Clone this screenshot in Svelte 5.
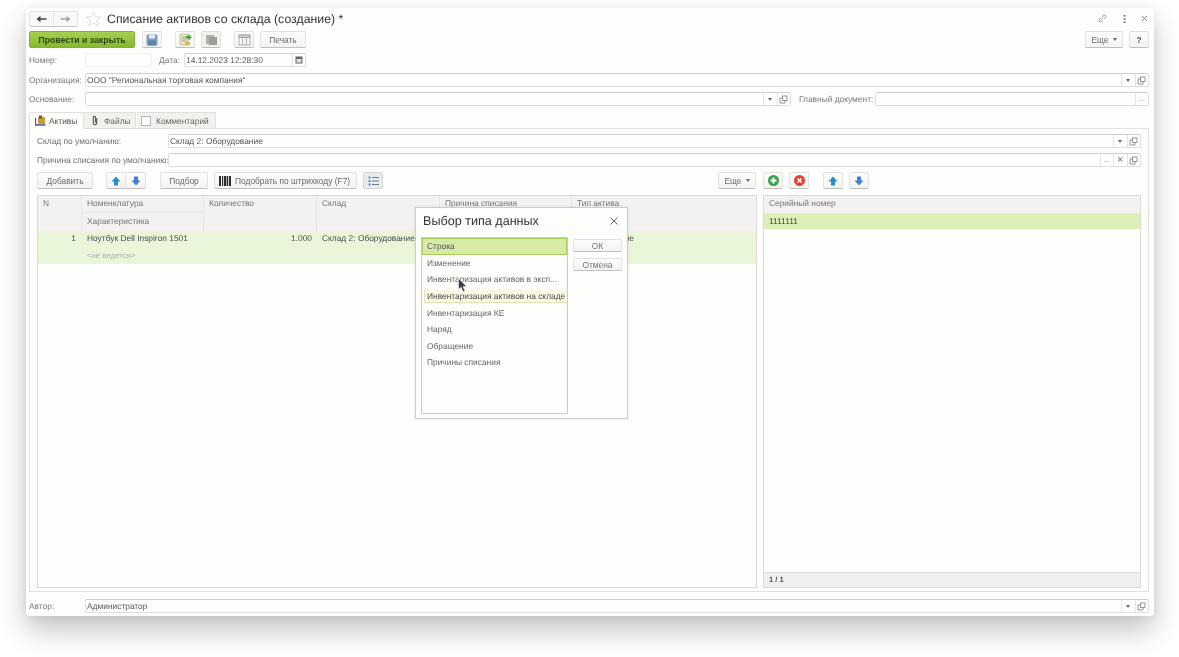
<script lang="ts">
  const listItems = [
    "Строка",
    "Изменение",
    "Инвентаризация активов в эксп...",
    "Инвентаризация активов на складе",
    "Инвентаризация КЕ",
    "Наряд",
    "Обращение",
    "Причины списания",
  ];
</script>

{#snippet openIcon()}
  <svg width="9" height="9" viewBox="0 0 9 9" fill="none" stroke="#8a8a8a" stroke-width="0.9">
    <rect x="3.5" y="1" width="4.5" height="4.5" />
    <path d="M3.5 3H1v5h5V5.5" />
  </svg>
{/snippet}

{#snippet arrow(dir: "up" | "down")}
  <svg width="10" height="10" viewBox="0 0 10 10" class:flip={dir === "down"}>
    <path d="M5 0.5 9.5 5.5H7v4H3v-4H0.5z" fill={dir === "up" ? "#2a8fc9" : "#3f83cf"} />
  </svg>
{/snippet}

{#snippet field(value: string, kind: string[])}
  <div class="field">
    <span class="field__value">{value}</span>
    {#each kind as k}
      <span class="field__btn">
        {#if k === "drop"}<i class="tri"></i>
        {:else if k === "open"}{@render openIcon()}
        {:else if k === "dots"}<span class="dots">...</span>
        {:else if k === "clear"}<span class="clear">×</span>
        {/if}
      </span>
    {/each}
  </div>
{/snippet}

<div class="frame">
  <div class="window">
    <header class="titlebar">
      <div class="nav">
        <button class="nav__btn" aria-label="Назад">
          <svg width="11" height="8" viewBox="0 0 11 8"><path d="M0.5 4 4.5 0.8V3.2H10.5V4.8H4.5V7.2z" fill="#444" /></svg>
        </button>
        <button class="nav__btn" aria-label="Вперед">
          <svg width="11" height="8" viewBox="0 0 11 8"><path d="M10.5 4 6.5 0.8V3.2H0.5V4.8H6.5V7.2z" fill="#a5a5a5" /></svg>
        </button>
      </div>
      <svg class="star" width="17" height="16" viewBox="0 0 17 16" fill="none" stroke="#e0e0dc" stroke-width="1">
        <path d="M8.5 1 10.6 6h5.4l-4.3 3.5 1.6 5.4-4.8-3.1-4.8 3.1 1.6-5.4L1 6h5.4z" />
      </svg>
      <h1>Списание активов со склада (создание) *</h1>
      <div class="titlebar__tools">
        <svg width="11" height="11" viewBox="0 0 11 11" fill="none" stroke="#9a9a9a" stroke-width="0.9">
          <path d="M4.5 6.5 6.5 4.5M4 5 2 7a1.6 1.6 0 0 0 2 2l2-2M7 6l2-2a1.6 1.6 0 0 0-2-2L5 4" />
        </svg>
        <svg width="3" height="8" viewBox="0 0 3 8" fill="#777"><rect x="0.5" y="0" width="2" height="1.6" /><rect x="0.5" y="3.2" width="2" height="1.6" /><rect x="0.5" y="6.4" width="2" height="1.6" /></svg>
        <svg width="7" height="7" viewBox="0 0 7 7" stroke="#8a8a8a" stroke-width="1"><path d="M1 1 6 6M6 1 1 6" /></svg>
      </div>
    </header>

    <div class="commands">
      <button class="btn btn--primary">Провести и закрыть</button>
      <button class="btn btn--icon gap-7" aria-label="Записать">
        <svg width="12" height="12" viewBox="0 0 12 12">
          <rect x="0.5" y="0.5" width="11" height="11" rx="1" fill="#7c9dc0" />
          <rect x="3" y="1" width="6" height="3.5" fill="#dfe8f0" />
          <rect x="2.5" y="6.5" width="7" height="5" fill="#5f81a6" />
        </svg>
      </button>
      <button class="btn btn--icon gap-13" aria-label="Создать на основании">
        <svg width="13" height="13" viewBox="0 0 13 13">
          <rect x="1" y="1" width="8" height="11" fill="#e9e6c8" stroke="#a9a98a" stroke-width="0.6" />
          <path d="M2.5 4h5M2.5 6h5M2.5 8h5" stroke="#9aa07a" stroke-width="0.8" />
          <path d="M7 3h2.5V1l3.3 3.2-3.3 3.2V5.5H7z" fill="#3fa24a" />
          <path d="M6 9h5v3H6z" fill="#d9b74a" />
        </svg>
      </button>
      <button class="btn btn--icon gap-6 btn--muted" aria-label="Структура подчиненности">
        <svg width="13" height="12" viewBox="0 0 13 12">
          <rect x="1" y="1" width="8" height="9" fill="#b4b0ae" />
          <rect x="4" y="3" width="8" height="8" fill="#a09c9a" />
        </svg>
      </button>
      <button class="btn btn--icon gap-13" aria-label="Таблица">
        <svg width="13" height="12" viewBox="0 0 13 12" fill="none" stroke="#a0a0a0" stroke-width="0.8">
          <rect x="1" y="1" width="11" height="10" />
          <path d="M1 3.5H12M4.6 3.5V11M8.4 3.5V11" />
          <rect x="1" y="1" width="11" height="2.5" fill="#cfcfcf" />
        </svg>
      </button>
      <button class="btn gap-6 print">Печать</button>
      <button class="btn more ml-auto">Еще <i class="tri"></i></button>
      <button class="btn help gap-6">?</button>
    </div>

    <div class="form-row date-row">
      <span class="label label--main">Номер:</span>
      <div class="field field--number"></div>
      <span class="label label--date">Дата:</span>
      <div class="field field--date">
        <span class="field__value">14.12.2023 12:28:30</span>
        <span class="field__btn">
          <svg width="8" height="8" viewBox="0 0 8 8"><rect x="0.5" y="0.5" width="7" height="7" fill="#666" /><path d="M1.5 3h5v3.5h-5z" fill="#ddd" /></svg>
        </span>
      </div>
    </div>

    <div class="form-row org-row">
      <span class="label label--main">Организация:</span>
      {@render field('ООО "Региональная торговая компания"', ["drop", "open"])}
    </div>

    <div class="form-row">
      <span class="label label--main">Основание:</span>
      {@render field("", ["drop", "open"])}
      <span class="label label--doc">Главный документ:</span>
      <div class="doc-field">{@render field("", ["dots"])}</div>
    </div>

    <div class="tabs">
      <div class="tab tab--active">
        <svg width="11" height="11" viewBox="0 0 11 11">
          <rect x="3" y="2" width="7" height="7" fill="#c79a3a" />
          <rect x="4" y="0.5" width="3" height="3" fill="#7d5c1c" />
          <path d="M0.5 3V10H10.5" fill="none" stroke="#3b5f92" stroke-width="1.3" />
        </svg>
        Активы
      </div>
      <div class="tab tab--files">
        <svg width="6" height="11" viewBox="0 0 6 11" fill="none" stroke="#555" stroke-width="1.1">
          <path d="M4.7 3V8a1.7 1.7 0 0 1-3.4 0V2.5a1.1 1.1 0 0 1 2.2 0V7.5" />
        </svg>
        Файлы
      </div>
      <div class="tab tab--notes">
        <span class="checkbox"></span>
        Комментарий
      </div>
    </div>

    <section class="panel">
      <div class="form-row form-row--panel">
        <span class="label label--panel">Склад по умолчанию:</span>
        {@render field("Склад 2: Оборудование", ["drop", "open"])}
      </div>
      <div class="form-row form-row--panel">
        <span class="label label--panel">Причина списания по умолчанию:</span>
        {@render field("", ["dots", "clear", "open"])}
      </div>

      <div class="toolbars">
        <div class="toolbar toolbar--left">
          <button class="btn add">Добавить</button>
          <div class="btn-group gap-13">
            <button class="btn btn--icon" aria-label="Вверх">{@render arrow("up")}</button>
            <button class="btn btn--icon" aria-label="Вниз">{@render arrow("down")}</button>
          </div>
          <button class="btn pick gap-14">Подбор</button>
          <button class="btn barcode gap-6">
            <svg width="12" height="10" viewBox="0 0 12 10" fill="#2c2c2c">
              <rect x="0" width="2" height="10" /><rect x="3" width="1.2" height="10" /><rect x="5" width="2.4" height="10" /><rect x="8" width="1.2" height="10" /><rect x="10" width="2" height="10" />
            </svg>
            Подобрать по штрихкоду (F7)
          </button>
          <button class="btn btn--icon btn--on gap-6" aria-label="Показать список">
            <svg width="11" height="10" viewBox="0 0 11 10" fill="none" stroke="#6e7a86" stroke-width="1">
              <path d="M4 1.5H11M4 5H11M4 8.5H11" />
              <path d="M1.5 0.5V9.5" stroke="#3f83cf" stroke-width="1.8" stroke-dasharray="2 1.5" />
            </svg>
          </button>
          <button class="btn more ml-auto">Еще <i class="tri"></i></button>
        </div>
        <div class="toolbar toolbar--right">
          <button class="btn btn--icon" aria-label="Добавить">
            <svg width="11" height="11" viewBox="0 0 11 11"><circle cx="5.5" cy="5.5" r="5.5" fill="#3c9f4e" /><path d="M5.5 2.5v6M2.5 5.5h6" stroke="#fff" stroke-width="2" /></svg>
          </button>
          <button class="btn btn--icon gap-6" aria-label="Удалить">
            <svg width="11" height="11" viewBox="0 0 11 11"><circle cx="5.5" cy="5.5" r="5.5" fill="#e0443a" /><path d="M3.5 3.5l4 4M7.5 3.5l-4 4" stroke="#fff" stroke-width="1.5" /></svg>
          </button>
          <button class="btn btn--icon gap-14" aria-label="Вверх">{@render arrow("up")}</button>
          <button class="btn btn--icon gap-6" aria-label="Вниз">{@render arrow("down")}</button>
        </div>
      </div>

      <div class="tables">
        <div class="table">
          <div class="thead">
            <div class="th th--n">N</div>
            <div class="th-stack">
              <div class="th">Номенклатура</div>
              <div class="th th--sub">Характеристика</div>
            </div>
            <div class="th th--qty">Количество</div>
            <div class="th th--stock">Склад</div>
            <div class="th th--reason">Причина списания</div>
            <div class="th th--type">Тип актива</div>
          </div>
          <div class="tr">
            <div class="td td--n">1</div>
            <div class="th-stack">
              <div class="td td--name">Ноутбук Dell Inspiron 1501</div>
              <div class="td td--none">&lt;не ведется&gt;</div>
            </div>
            <div class="td td--qty">1.000</div>
            <div class="td td--stock">Склад 2: Оборудование</div>
            <div class="td td--reason"></div>
            <div class="td td--type">Оборудование</div>
          </div>
        </div>

        <div class="table table--serial">
          <div class="thead thead--serial"><div class="th">Серийный номер</div></div>
          <div class="serial">1111111</div>
          <div class="table__fill"></div>
          <div class="table__foot">1 / 1</div>
        </div>
      </div>
    </section>

    <div class="form-row author">
      <span class="label label--main">Автор:</span>
      {@render field("Администратор", ["drop", "open"])}
    </div>

    <div class="dialog" role="dialog" aria-label="Выбор типа данных">
      <div class="dialog__head">
        <h2>Выбор типа данных</h2>
        <svg width="8" height="8" viewBox="0 0 8 8" stroke="#666" stroke-width="1"><path d="M0.5 0.5 7.5 7.5M7.5 0.5 0.5 7.5" /></svg>
      </div>
      <div class="dialog__body">
        <ul class="list">
          {#each listItems as item, i}
            <li class:selected={i === 0} class:tip={i === 3}>{item}</li>
          {/each}
        </ul>
        <div class="dialog__actions">
          <button class="btn dialog__btn">ОК</button>
          <button class="btn dialog__btn">Отмена</button>
        </div>
      </div>
      <svg class="cursor" width="10" height="15" viewBox="0 0 10 15">
        <path d="M0.5 0.5V11.5L3 9.2 5 13.8 7 13 5 8.5H8.8z" fill="#3a4048" stroke="#e8e8e8" stroke-width="0.7" />
      </svg>
    </div>
  </div>
</div>

<style>
  :global(body) {
    background: #fff;
    min-height: 657px;
  }

  .frame {
    width: 1128px;
    height: 608px;
    margin: 0 0 0 26px;
    position: relative;
    top: 8px;
    border-radius: 4px;
    box-shadow: 0 14px 28px rgba(0, 0, 0, 0.24), 0 0 10px rgba(0, 0, 0, 0.06);
  }

  .window {
    position: relative;
    box-sizing: border-box;
    width: 100%;
    height: 100%;
    padding: 2px 5px 0 3px;
    background: #fdfdfb;
    border-radius: 4px;
    font-family: "Liberation Sans", Arial, sans-serif;
    font-size: 8.4px;
    color: #5a5a5a;
    text-rendering: geometricPrecision;
    filter: blur(0.4px);
  }

  button {
    font: inherit;
    color: inherit;
    padding: 0;
    cursor: default;
  }

  .titlebar {
    display: flex;
    align-items: center;
    height: 17px;
  }

  .nav {
    display: flex;
    width: 49px;
    height: 16px;
    box-sizing: border-box;
    border: 1px solid #e2e2de;
    border-bottom-color: #c4c4c0;
    border-radius: 2px;
    background: #f8f8f6;
  }

  .nav__btn {
    flex: 1;
    display: flex;
    align-items: center;
    justify-content: center;
    border: 0;
    background: none;
  }

  .nav__btn + .nav__btn {
    border-left: 1px solid #e8e8e4;
  }

  .star {
    margin-left: 7px;
  }

  h1 {
    margin: 0 0 0 5px;
    font-size: 12.3px;
    font-weight: 400;
    color: #333;
    white-space: nowrap;
  }

  .titlebar__tools {
    margin-left: auto;
    display: flex;
    align-items: center;
    gap: 15px;
    padding-right: 1px;
  }

  .commands {
    display: flex;
    align-items: center;
    height: 17px;
    margin-top: 4px;
  }

  .btn {
    display: inline-flex;
    align-items: center;
    justify-content: center;
    box-sizing: border-box;
    height: 17px;
    border: 1px solid #e2e2de;
    border-bottom-color: #bfbfbb;
    border-radius: 2px;
    background: linear-gradient(#fcfcfa, #f3f3f0);
    color: #6a6a6a;
    flex: none;
    white-space: nowrap;
  }

  .btn--primary {
    width: 106px;
    border: 1px solid #84ad3e;
    background: linear-gradient(#a5d04f, #84ba30);
    font-weight: 700;
    color: #2f4410;
    font-size: 8.7px;
  }

  .btn--icon {
    width: 20px;
  }

  .btn--muted {
    background: #f0f0ed;
  }

  .btn--on {
    background: #e9ecee;
    border-color: #d4d4d0;
  }

  .gap-6 { margin-left: 6px; }
  .gap-7 { margin-left: 7px; }
  .gap-13 { margin-left: 13px; }
  .gap-14 { margin-left: 14px; }
  .ml-auto { margin-left: auto; }

  .print { width: 46px; }
  .more { width: 38px; gap: 4px; }
  .help { width: 20px; font-weight: 700; color: #555; }

  .tri {
    display: inline-block;
    width: 0;
    height: 0;
    border-left: 2.5px solid transparent;
    border-right: 2.5px solid transparent;
    border-top: 3px solid #666;
  }

  .form-row {
    display: flex;
    align-items: center;
    height: 14px;
    margin-top: 5px;
  }

  .org-row {
    margin-top: 6px;
  }

  .label {
    flex: none;
    color: #7a7a7a;
    white-space: nowrap;
  }

  .label--main { width: 56px; }
  .label--date { margin: 0 3px 0 7px; width: 22px; }
  .label--doc { width: 73px; margin: 0 3px 0 8px; }
  .label--panel { width: 131px; color: #707070; }

  .field {
    flex: 1;
    min-width: 0;
    display: flex;
    box-sizing: border-box;
    height: 14px;
    border: 1px solid #dededa;
    border-top-color: #cfcfcb;
    border-radius: 2px;
    background: #fefefd;
    align-items: stretch;
    line-height: 12px;
  }

  .field__value {
    flex: 1;
    padding-left: 1px;
    color: #555;
    white-space: nowrap;
  }

  .field__btn {
    flex: none;
    width: 13.5px;
    box-sizing: border-box;
    display: flex;
    align-items: center;
    justify-content: center;
    border-left: 1px solid #e4e4e0;
  }

  .dots {
    color: #888;
    font-size: 8px;
    line-height: 8px;
  }

  .clear {
    color: #777;
    font-size: 11px;
  }

  .field--number {
    flex: none;
    width: 67px;
    border-color: #efefed;
  }

  .field--date {
    flex: none;
    width: 122px;
  }

  .doc-field {
    flex: none;
    width: 274px;
    display: flex;
  }

  .tabs {
    display: flex;
    height: 17px;
    margin-top: 6px;
    position: relative;
    z-index: 1;
  }

  .tab {
    display: flex;
    align-items: center;
    gap: 3px;
    box-sizing: border-box;
    height: 17px;
    border: 1px solid #e0e0dc;
    background: #f1f1ee;
    color: #666;
  }

  .tab--active {
    width: 55px;
    padding-left: 5px;
    background: #fdfdfb;
    border-bottom-color: #fdfdfb;
    border-radius: 2px 0 0 0;
    color: #555;
  }

  .tab--files {
    width: 52px;
    padding-left: 8px;
    border-left: 0;
    gap: 6px;
  }

  .tab--notes {
    width: 79px;
    padding-left: 4px;
    border-left: 0;
    margin-left: 1px;
    gap: 5px;
  }

  .checkbox {
    width: 8px;
    height: 8px;
    border: 1px solid #b4b4b4;
    background: #fff;
  }

  .panel {
    display: flex;
    flex-direction: column;
    box-sizing: border-box;
    height: 464px;
    margin-top: -1px;
    padding: 5px 7px 3px;
    border: 1px solid #e0e0dc;
  }

  .form-row--panel {
    margin-top: 0;
  }

  .form-row--panel + .form-row--panel {
    margin-top: 5px;
  }

  .toolbars {
    display: flex;
    margin-top: 5px;
    height: 17px;
  }

  .toolbar {
    display: flex;
    align-items: center;
  }

  .toolbar--left {
    width: 719px;
  }

  .toolbar--right {
    margin-left: 7px;
  }

  .add { width: 56px; }
  .pick { width: 48px; }

  .barcode {
    width: 143px;
    gap: 4px;
    justify-content: flex-start;
    padding-left: 4px;
  }

  .btn-group {
    display: flex;
  }

  .btn-group .btn + .btn {
    margin-left: -1px;
    width: 21px;
  }

  :global(.flip) {
    transform: rotate(180deg);
  }

  .tables {
    flex: 1;
    min-height: 0;
    display: flex;
    gap: 6px;
    margin-top: 6px;
  }

  .table {
    box-sizing: border-box;
    width: 720px;
    flex: none;
    border: 1px solid #dadad6;
    position: relative;
    background: #fefefd;
  }

  .table--serial {
    width: 378px;
    display: flex;
    flex-direction: column;
  }

  .thead,
  .tr {
    display: grid;
    grid-template-columns: 44px 122px 113px 123px 132px 1fr;
  }

  .thead {
    height: 35px;
    background: #f3f2f1;
  }

  .tr {
    height: 33px;
    background: #e9f6da;
  }

  .th,
  .td {
    box-sizing: border-box;
    padding: 0 5px;
    white-space: nowrap;
    overflow: hidden;
  }

  .th {
    color: #767676;
    border-right: 1px solid #e8e7e5;
    height: 100%;
    line-height: 15px;
  }

  .th-stack .th {
    height: 16px;
  }

  .th-stack .th--sub {
    height: 19px;
    border-top: 1px solid #e8e7e5;
    line-height: 17px;
  }

  .th--type {
    border-right: 0;
  }

  .td {
    color: #4d4d4d;
    line-height: 15px;
  }

  .td--n {
    text-align: right;
    padding-right: 6px;
  }

  .td--none {
    color: #b0b0b0;
    font-size: 7.8px;
    padding-top: 2px;
  }

  .td--qty {
    text-align: right;
  }

  .thead--serial {
    display: block;
    height: 17px;
    flex: none;
    border-bottom: 1px solid #e8e7e5;
  }

  .thead--serial .th {
    border-right: 0;
  }

  .serial {
    height: 15px;
    flex: none;
    padding-left: 5px;
    line-height: 14px;
    background: #dcefb4;
    color: #444;
  }

  .table__fill {
    flex: 1;
  }

  .table__foot {
    flex: none;
    box-sizing: border-box;
    height: 15px;
    padding-left: 5px;
    line-height: 14px;
    background: #efefed;
    border-top: 1px solid #e0e0dc;
    font-weight: 700;
    font-size: 7.5px;
    color: #555;
  }

  .author {
    margin-top: 7px;
  }

  .dialog {
    position: absolute;
    left: 389px;
    top: 199px;
    box-sizing: border-box;
    width: 213px;
    height: 212px;
    padding: 0 5px;
    background: #fdfdfc;
    border: 1px solid #cdcdcb;
    box-shadow: 0 0 3px rgba(0, 0, 0, 0.1);
  }

  .dialog__head {
    display: flex;
    align-items: center;
    justify-content: space-between;
    height: 25px;
    padding: 0 4px 0 2px;
  }

  h2 {
    margin: 0;
    font-size: 12.6px;
    font-weight: 400;
    color: #333;
  }

  .dialog__body {
    display: flex;
    gap: 5px;
    margin-top: 4px;
  }

  .list {
    box-sizing: border-box;
    width: 147px;
    height: 177px;
    margin: 0;
    padding: 0;
    list-style: none;
    border: 1px solid #cbcbc9;
  }

  .list li {
    box-sizing: border-box;
    height: 16.65px;
    padding-left: 5px;
    line-height: 16.65px;
    color: #666;
    white-space: nowrap;
  }

  .list .selected {
    background: #d7eaa6;
    border: 1px solid #a6cc5a;
    padding-left: 4px;
    line-height: 15px;
    color: #555;
  }

  .list .tip {
    position: relative;
    width: 143px;
    margin-left: 2px;
    padding-left: 2px;
    height: 13px;
    top: 2px;
    margin-bottom: 3.65px;
    line-height: 12px;
    background: #fbf9e4;
    border: 1px solid #e3e0b8;
    border-width: 0 0 1px 1px;
    color: #4c4c4c;
  }

  .dialog__actions {
    display: flex;
    flex-direction: column;
    gap: 6px;
    padding-top: 2px;
  }

  .dialog__btn {
    width: 49px;
    height: 13px;
    color: #777;
  }

  .cursor {
    position: absolute;
    left: 42px;
    top: 70px;
  }
</style>
